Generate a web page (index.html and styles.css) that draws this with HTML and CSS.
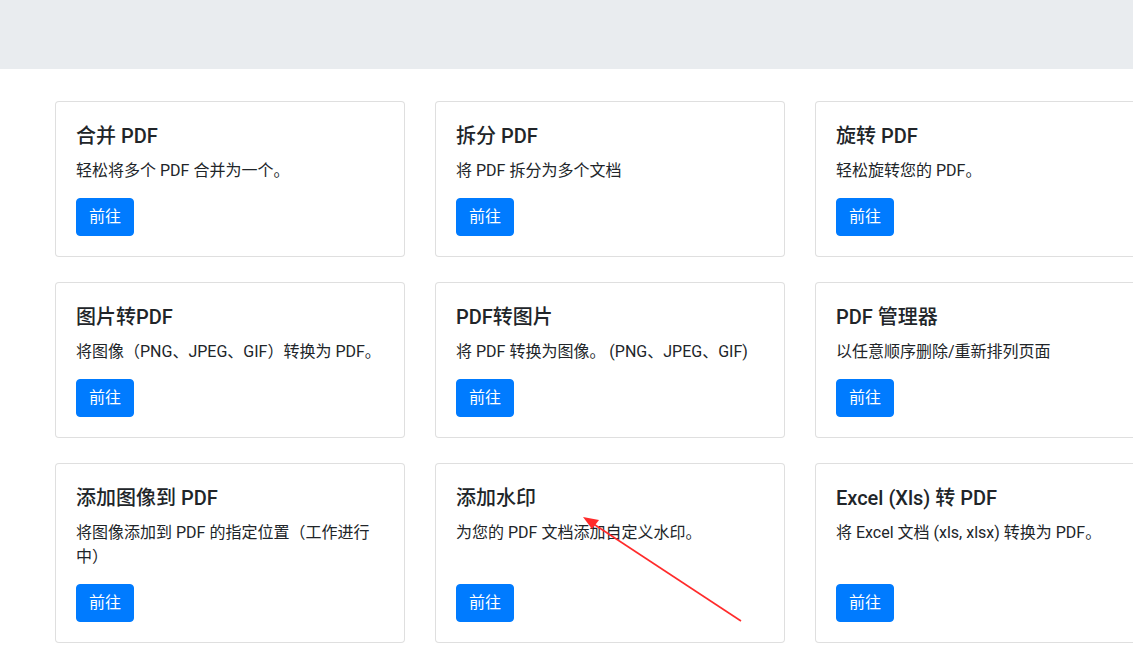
FILE: index.html
```html
<!DOCTYPE html>
<html lang="zh-CN">
<head>
    <meta charset="UTF-8">
    <meta name="viewport" content="width=device-width, initial-scale=1.0">
    <title>PDF 工具</title>
    <link rel="stylesheet" href="styles.css">
</head>
<body>

    <div class="top-band"></div>

    <div class="container">
        <div class="tool-grid">
            <div class="card">
                <h5 class="card-title">合并 PDF</h5>
                <p class="card-text">轻松将多个 PDF 合并为一个。</p>
                <a href="#" class="btn">前往</a>
            </div>
            <div class="card">
                <h5 class="card-title">拆分 PDF</h5>
                <p class="card-text">将 PDF 拆分为多个文档</p>
                <a href="#" class="btn">前往</a>
            </div>
            <div class="card">
                <h5 class="card-title">旋转 PDF</h5>
                <p class="card-text">轻松旋转您的 PDF。</p>
                <a href="#" class="btn">前往</a>
            </div>

            <div class="card">
                <h5 class="card-title">图片转PDF</h5>
                <p class="card-text">将图像（PNG、JPEG、GIF）转换为 PDF。</p>
                <a href="#" class="btn">前往</a>
            </div>
            <div class="card">
                <h5 class="card-title">PDF转图片</h5>
                <p class="card-text">将 PDF 转换为图像。 (PNG、JPEG、GIF)</p>
                <a href="#" class="btn">前往</a>
            </div>
            <div class="card">
                <h5 class="card-title">PDF 管理器</h5>
                <p class="card-text">以任意顺序删除/重新排列页面</p>
                <a href="#" class="btn">前往</a>
            </div>

            <div class="card">
                <h5 class="card-title">添加图像到 PDF</h5>
                <p class="card-text">将图像添加到 PDF 的指定位置（工作进行中）</p>
                <a href="#" class="btn">前往</a>
            </div>
            <div class="card">
                <h5 class="card-title">添加水印</h5>
                <p class="card-text">为您的 PDF 文档添加自定义水印。</p>
                <a href="#" class="btn">前往</a>
            </div>
            <div class="card">
                <h5 class="card-title">Excel (Xls) 转 PDF</h5>
                <p class="card-text">将 Excel 文档 (xls, xlsx) 转换为 PDF。</p>
                <a href="#" class="btn">前往</a>
            </div>
        </div>
    </div>

    <!-- Annotation arrow drawn over the screenshot -->
    <svg class="annotation" width="1133" height="653" viewBox="0 0 1133 653">
        <line x1="741" y1="621" x2="592" y2="523" stroke="#ff2b2b" stroke-width="1.6"/>
        <polygon points="583,517 599,520 592,529" fill="#ff2b2b"/>
    </svg>

</body>
</html>
```

FILE: styles.css
```css
html, body {
    overflow: hidden;
}

body {
    margin: 0;
    padding: 0;
    font-family: "Segoe UI", Roboto, "Noto Sans CJK SC", sans-serif;
    font-size: 16px;
    line-height: 1.5;
    color: #212529;
    background-color: #fff;
}

.top-band {
    height: 69px;
    background-color: #e9ecef;
}

.container {
    padding: 32px 0 0 55px;
}

.tool-grid {
    display: grid;
    grid-template-columns: repeat(3, 350px);
    column-gap: 30px;
    row-gap: 25px;
}

.card {
    display: flex;
    flex-direction: column;
    align-items: flex-start;
    padding: 20px;
    border: 1px solid rgba(0, 0, 0, 0.125);
    border-radius: 4px;
    background: #fff;
}

.card-title {
    margin: 2px 0 11px;
    font-size: 20px;
    font-weight: 500;
    line-height: 1.2;
}

.card-text {
    margin: 0 0 15px;
}

.btn {
    margin-top: auto;
    padding: 6px 12px;
    border: 1px solid #007bff;
    border-radius: 4px;
    background-color: #007bff;
    color: #fff;
    text-decoration: none;
    line-height: 24px;
}

/* Red arrow sits on top of the page */
.annotation {
    position: absolute;
    top: 0;
    left: 0;
    pointer-events: none;
}
```
